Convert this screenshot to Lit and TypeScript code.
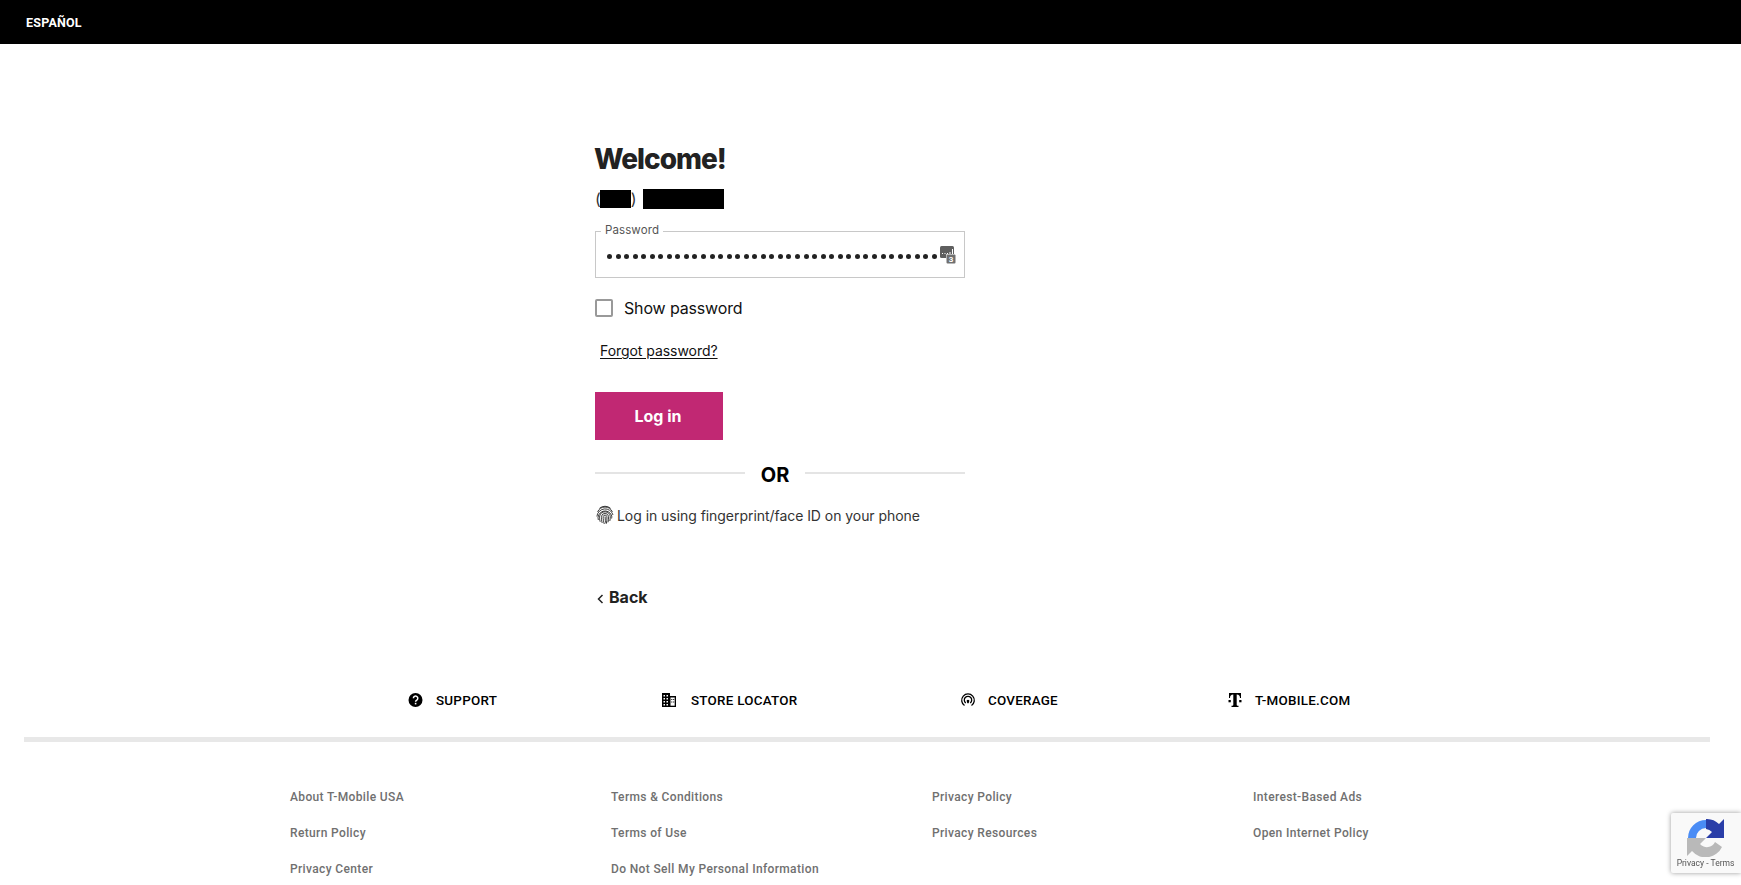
import { LitElement, html, css, svg } from "lit";
import { customElement } from "lit/decorators.js";

const nav = [
  { label: "SUPPORT", icon: svg`<circle cx="7.500" cy="8" r="7" fill="#000"/><path d="M5.400 6.300a2.200 2.200 0 1 1 3.400 1.800c-.8.500-1.200.9-1.200 1.700" fill="none" stroke="#fff" stroke-width="1.500"/><rect x="6.800" y="10.800" width="1.600" height="1.600" fill="#fff"/>` },
  { label: "STORE LOCATOR", icon: svg`<path d="M1 1h8v3h6v11H1z" fill="#000"/><path d="M2.500 3H4v1.500H2.500zM5.500 3H7v1.500H5.500zM2.500 6H4v1.500H2.500zM5.500 6H7v1.500H5.500zM2.500 9H4v1.500H2.500zM5.500 9H7v1.500H5.500zM2.500 12H4v1.500H2.500zM5.500 12H7v1.500H5.500z" fill="#fff"/><path d="M9.500 5.500h4.200v8.200H9.500z" fill="#fff"/><path d="M10.300 7h1v1h-1zM12.200 7h1v1h-1zM10.300 9.500h1v1h-1zM12.200 9.500h1v1h-1z" fill="#000"/>` },
  { label: "COVERAGE", icon: svg`<g fill="none" stroke="#000" stroke-width="1.300"><path d="M4.500 13.500A6.300 6.300 0 1 1 11.500 13.500"/><path d="M5.800 11A3.700 3.700 0 1 1 10.200 11"/></g><path d="M6.800 9.500a1.300 1.300 0 1 1 2.400 0l-.6 1.800H7.400z" fill="#000"/>` },
  { label: "T-MOBILE.COM", icon: svg`<path d="M2 1h12v5h-1c0-2-1-3.300-3.300-3.400v10.200c0 .8.400 1 1.800 1V15H4.500v-1.200c1.400 0 1.800-.2 1.800-1V2.600C4 2.700 3 4 3 6H2z" fill="#000"/><rect x="1.500" y="8" width="2.300" height="2.300" fill="#000"/><rect x="12.200" y="8" width="2.300" height="2.300" fill="#000"/>` },
];

const cols = [
  ["About T-Mobile USA", "Return Policy", "Privacy Center"],
  ["Terms & Conditions", "Terms of Use", "Do Not Sell My Personal Information"],
  ["Privacy Policy", "Privacy Resources"],
  ["Interest-Based Ads", "Open Internet Policy"],
];

@customElement("app-root")
export class AppRoot extends LitElement {
  static styles = css`
    :host { display: block; height: 885px; overflow: hidden; position: relative; background: #fff; font-family: Inter, "Liberation Sans", sans-serif; color: #000; }
    .top { height: 44px; background: #000; color: #fff; display: flex; align-items: center; padding: 1px 0 0 26px; font: 700 12.500px Roboto, sans-serif; letter-spacing: .2px; box-sizing: border-box; }
    .main { width: 370px; margin-left: 595px; display: flex; flex-direction: column; align-items: flex-start; }
    h1 { margin: 97px 0 0 -1px; font: 800 28px/36px Inter, sans-serif; color: #222; letter-spacing: -1px; height: 36px; }
    .phone { display: flex; align-items: center; height: 22px; margin-top: 11px; font-size: 16px; color: #333; }
    .r1 { width: 31px; height: 18px; background: #000; margin-left: -1px; }
    .r2 { width: 81px; height: 20px; background: #000; margin-left: 6px; }
    .fieldwrap { margin-top: 13px; width: 370px; height: 55px; padding-top: 8px; box-sizing: border-box; position: relative; }
    .field { width: 370px; height: 47px; box-sizing: border-box; border: 1px solid #c8c8c8; padding: 0 0 0 11px; position: relative; }
    .legend { position: absolute; left: 5px; top: -9px; background: #fff; padding: 0 4px; font-size: 11.500px; line-height: 15px; color: #555; letter-spacing: .1px; }
    .dots { display: flex; gap: 3.550px; height: 100%; align-items: center; padding-top: 3px; box-sizing: border-box; }
    .dots i { width: 5px; height: 5px; background: #222; border-radius: 50%; flex: none; }
    .key { position: absolute; left: 344px; top: 14px; }
    .show { display: flex; align-items: center; margin-top: 18px; height: 24px; font-size: 16px; color: #111; letter-spacing: -.15px; }
    .box { width: 14px; height: 14px; border: 2px solid #999; border-radius: 2px; margin-right: 11px; background: #fff; }
    .forgot { margin: 21px 0 0 5px; font-size: 14px; line-height: 20px; color: #111; letter-spacing: -.05px; text-decoration: underline; text-underline-offset: 2px; }
    .btn { margin-top: 31px; width: 128px; height: 48px; background: #c12873; color: #fff; font-weight: 700; font-size: 16px; display: flex; align-items: center; justify-content: center; padding: 0 2px 1px 0; box-sizing: border-box; }
    .or { width: 370px; display: flex; align-items: center; margin-top: 21px; height: 24px; font-weight: 700; font-size: 20px; color: #000; }
    .or span { width: 60px; text-align: center; padding-top: 3px; box-sizing: border-box; }
    .or i { height: 2px; background: #e4e4e4; }
    .or .l { width: 150px; }
    .or .rr { width: 160px; }
    .finger { display: flex; align-items: center; margin-top: 18px; height: 24px; font-size: 14px; color: #333; padding-left: 1px; letter-spacing: -.05px; }
    .finger svg { margin-right: 3px; }
    .back { display: flex; align-items: center; margin-top: 58px; height: 24px; font-size: 16px; font-weight: 700; color: #222; padding-left: 2px; }
    .back svg { margin-right: 5px; margin-top: 3px; }
    .nav { display: grid; grid-template-columns: 253px 299px 267px auto; margin: 79px 0 0 408px; height: 24px; font: 500 13.400px Roboto, sans-serif; color: #000; letter-spacing: .25px; }
    .nav div { display: flex; align-items: center; }
    .nav svg { margin-right: 12px; flex: none; }
    .nav .store svg { margin-right: 14px; }
    .rule { height: 5px; background: #e8e8e8; margin: 25px 31px 0 24px; }
    .links { display: grid; grid-template-columns: repeat(4, 321px); margin: 37px 0 0 290px; font: 500 12px/36px Roboto, sans-serif; color: #707070; letter-spacing: .36px; }
    .recaptcha { position: fixed; left: 1671px; top: 813px; width: 70px; height: 60px; background: #f9f9f9; border-radius: 2px 0 0 2px; box-shadow: 0 0 5px rgba(0,0,0,.4); display: flex; flex-direction: column; align-items: center; font: 400 8.500px Roboto, sans-serif; color: #555; }
    .recaptcha svg { margin-top: 6px; }
    .recaptcha span { margin-top: 1px; white-space: nowrap; margin-left: -1px; }
  `;

  render() {
    return html`
      <div class="top">ESPAÑOL</div>
      <div class="main">
        <h1>Welcome!</h1>
        <div class="phone">(<span class="r1"></span>)<span class="r2"></span></div>
        <div class="fieldwrap">
          <div class="field">
            <span class="legend">Password</span>
            <div class="dots">${Array.from({ length: 39 }, () => html`<i></i>`)}</div>
            <svg class="key" width="16" height="18" viewBox="0 0 16 18">
              <rect x="0" y="0" width="14" height="12" rx="1.500" fill="#5f5f5f"/>
              <path d="M2 7h1v1H2zM4.500 7h1v1h-1zM7 7h1v1H7zM9.500 6h1v2h-1zM12 3h1v5h-1z" fill="#fff"/>
              <rect x="6" y="8" width="10" height="10" rx="1" fill="#fff"/>
              <rect x="6.500" y="8.500" width="9" height="9" rx="1" fill="#707070"/>
              <text x="11" y="16" text-anchor="middle" font-family="Roboto, sans-serif" font-weight="700" font-size="8" fill="#fff">3</text>
            </svg>
          </div>
        </div>
        <div class="show"><span class="box"></span>Show password</div>
        <div class="forgot">Forgot password?</div>
        <div class="btn">Log in</div>
        <div class="or"><i class="l"></i><span>OR</span><i class="rr"></i></div>
        <div class="finger">
          <svg width="18" height="20" viewBox="0 0 18 20" fill="none" stroke="#1c1c1c" stroke-width=".85">
            <path d="M3.500 3.300A8.500 8.500 0 0 1 14.500 3.300"/>
            <path d="M1.600 7A8 8 0 0 1 16.400 7"/>
            <path d="M.9 11.500A8.200 8.200 0 0 1 17 10"/>
            <path d="M2.300 15A6.800 6.800 0 1 1 15.800 11c0 .8 0 1.500-.2 2.500"/>
            <path d="M4.200 16.800C3.500 14.500 3.300 12.500 3.700 11A5.400 5.400 0 0 1 14.300 11.500c0 1.500-.1 3-.5 4.500"/>
            <path d="M6.200 18C5.500 15.500 5.200 13 5.500 11.300A3.600 3.600 0 0 1 12.600 11.500c.1 2.200-.1 4-.6 5.800"/>
            <path d="M8.300 19C7.500 16.500 7 14 7.200 11.500a1.900 1.900 0 0 1 3.700.2c.2 2.300 0 4.500-.5 6.800"/>
            <path d="M9.100 11.500c0 2.800.3 5 1 7"/>
          </svg>
          Log in using fingerprint/face ID on your phone
        </div>
        <div class="back">
          <svg width="7" height="10" viewBox="0 0 7 10" fill="none" stroke="#222" stroke-width="1.500"><path d="M5.500 1 1.500 5l4 4"/></svg>
          Back
        </div>
      </div>
      <div class="nav">
        ${nav.map((n, i) => html`<div class=${i === 1 ? "store" : ""}><svg width="16" height="16" viewBox="0 0 16 16">${n.icon}</svg>${n.label}</div>`)}
      </div>
      <div class="rule"></div>
      <div class="links">
        ${cols.map((c) => html`<div>${c.map((l) => html`<div>${l}</div>`)}</div>`)}
      </div>
      <div class="recaptcha">
        <svg width="38" height="38" viewBox="0 0 38 38">
          <path d="M19 1A18 18 0 0 0 1 19h8A10 10 0 0 1 19 9z" fill="#4a8cf5"/>
          <path d="M19 0A18 18 0 0 1 32 5L37 0V19H19l6-6A9 9 0 0 0 19 10z" fill="#2a3ea8"/>
          <path d="M0 19H19l-6 6A9 9 0 0 0 28 23l7 5A18 18 0 0 1 5 32L0 37z" fill="#b9b9b9"/>
        </svg>
        <span>Privacy - Terms</span>
      </div>
    `;
  }
}
